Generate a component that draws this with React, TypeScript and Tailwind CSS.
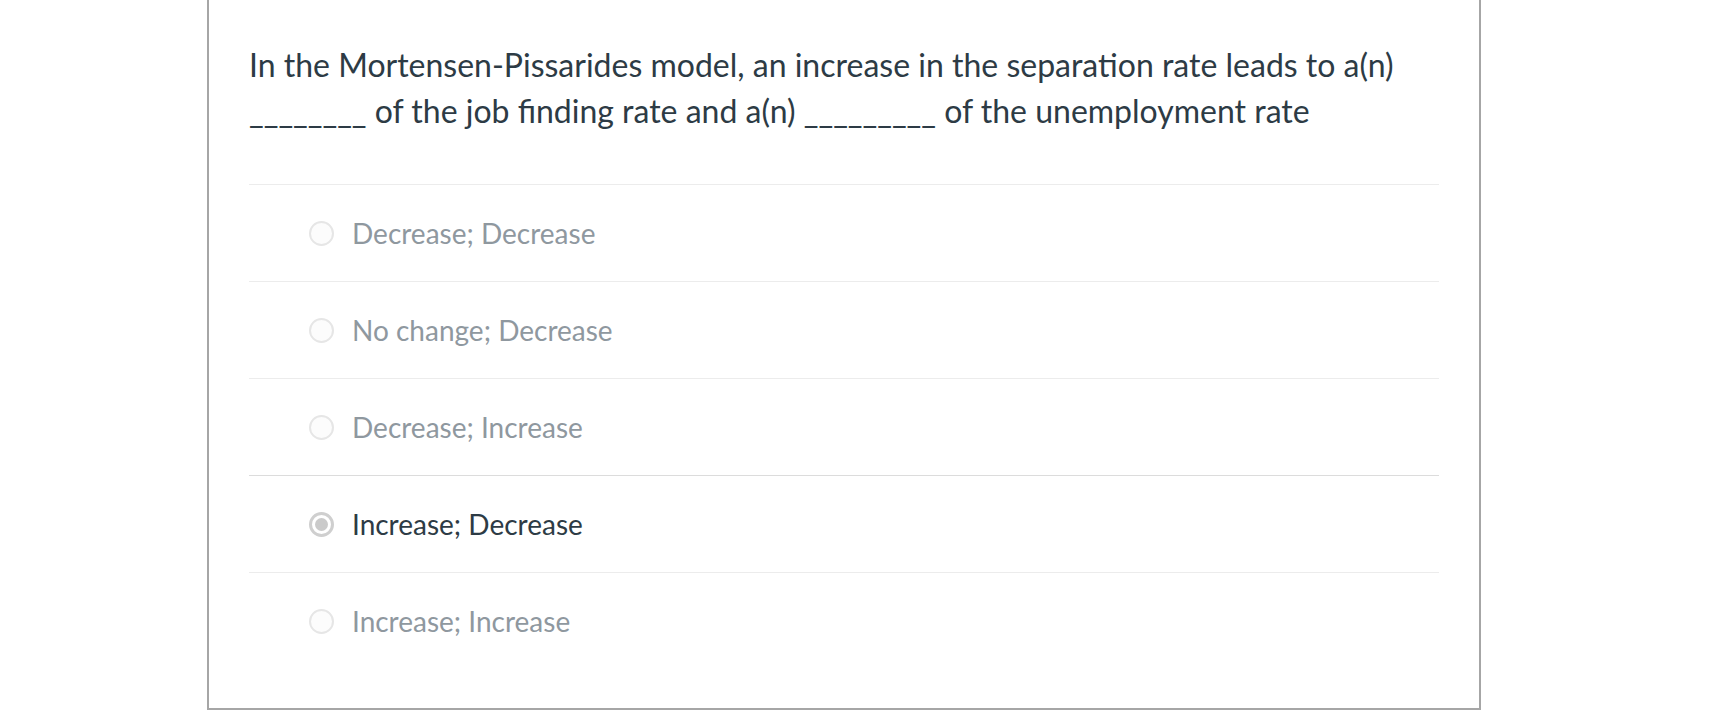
const options = [
  { label: "Decrease; Decrease", selected: false },
  { label: "No change; Decrease", selected: false },
  { label: "Decrease; Increase", selected: false },
  { label: "Increase; Decrease", selected: true },
  { label: "Increase; Increase", selected: false },
];

function Radio({ selected }: { selected: boolean }) {
  if (selected) {
    return (
      <span className="flex h-[25px] w-[25px] shrink-0 items-center justify-center rounded-full border-[3px] border-[#cfcfcf] bg-white">
        <span className="h-[13px] w-[13px] rounded-full bg-[#cacaca]" />
      </span>
    );
  }
  return <span className="h-[25px] w-[25px] shrink-0 rounded-full border-2 border-[#e6e6e6] bg-[#fcfcfc]" />;
}

export default function App() {
  return (
    <div className="min-h-[718px] bg-white font-['Lato','Noto_Sans',sans-serif]">
      <div className="ml-[207px] w-[1274px] border-x-2 border-b-2 border-[#a6a6a6] px-10 pt-[42px] pb-[39px]">
        <p className="text-[32px] leading-[46px] text-[#2d3b45]">
          In the Mortensen-Pissarides model, an increase in the separation rate leads to a(n)
          <br />
          ________ of the job finding rate and a(n) _________ of the unemployment rate
        </p>
        <div className="mt-[50px]">
          {options.map((o, i) => (
            <div
              key={o.label}
              className={`flex h-[97px] items-center gap-[18px] border-t pl-[60px] ${
                i === 3 ? "border-[#dcdcdc]" : "border-[#ececec]"
              }`}
            >
              <Radio selected={o.selected} />
              <span className={`text-[28px] ${o.selected ? "text-[#2d3b45]" : "text-[#8f989f]"}`}>{o.label}</span>
            </div>
          ))}
        </div>
      </div>
    </div>
  );
}
